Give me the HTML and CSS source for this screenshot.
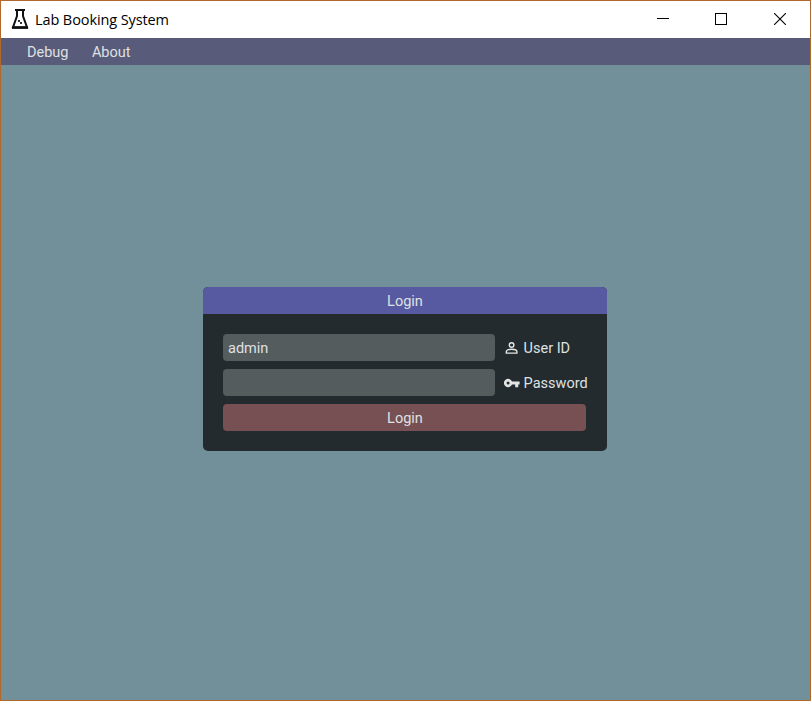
FILE: index.html
```html
<!DOCTYPE html>
<html lang="en">
<head>
<meta charset="utf-8">
<title>Lab Booking System</title>
<link rel="stylesheet" href="styles.css">
</head>
<body>
<div class="window">
  <header class="titlebar">
    <svg class="flask" width="18" height="22" viewBox="0 0 18 22" fill="none" stroke="#111" stroke-width="2">
      <path d="M4 2H14"/>
      <path d="M6 2V8L2 19.2H16L12 8V2" stroke-width="2"/>
      <path d="M1 19.7H17" stroke-width="2.4"/>
      <path d="M7 12H9V14H7ZM9 14H11V16H9Z" fill="#333" stroke="none"/>
    </svg>
    <h1 class="title">Lab Booking System</h1>
    <div class="controls">
      <svg width="12" height="12" viewBox="0 0 12 12" shape-rendering="crispEdges"><path d="M0 5H12V6H0Z"/></svg>
      <svg width="12" height="12" viewBox="0 0 12 12" fill="none" stroke="#000" shape-rendering="crispEdges"><path d="M.5 .5H11.5V11.5H.5Z"/></svg>
      <svg width="12" height="12" viewBox="0 0 12 12" fill="none" stroke="#000" stroke-width="1.1"><path d="M0 0L12 12M12 0L0 12"/></svg>
    </div>
  </header>
  <nav class="menubar"><span>Debug</span><span>About</span></nav>
  <main class="workspace">
    <form class="login">
      <h2 class="login-title">Login</h2>
      <div class="login-body">
        <div class="field">
          <div class="input">admin</div>
          <svg class="icon" width="16" height="16" viewBox="0 0 16 16" fill="none" stroke="#e3e5e5" stroke-width="1.4"><circle cx="7.6" cy="5" r="2.3"/><path d="M2.3 13.1V11.8C2.3 10.2 5 9.3 7.6 9.3S12.9 10.2 12.9 11.8V13.1Z"/></svg>
          <span>User ID</span>
        </div>
        <div class="field">
          <div class="input"></div>
          <svg class="icon" width="16" height="16" viewBox="0 0 16 16" fill="#e3e5e5"><path fill-rule="evenodd" d="M8 6.5H15.6V9.5H14.2V12.2H11.2V9.5H8A4.2 4.2 0 1 1 8 6.5ZM4.1 6.5A1.5 1.5 0 1 0 4.1 9.5A1.5 1.5 0 1 0 4.1 6.5Z"/></svg>
          <span>Password</span>
        </div>
        <div class="submit">Login</div>
      </div>
    </form>
  </main>
</div>
</body>
</html>
```
FILE: styles.css
```css
* { box-sizing: border-box; }
body { margin: 0; font: 14.5px/29px Roboto, sans-serif; color: #dfe1e2; }
.window {
  display: flex; flex-direction: column; width: 811px; height: 701px;
  border: 1px solid #b0692c; background: #729099;
}
.titlebar { display: flex; align-items: center; height: 37px; padding: 0 24px 0 10px; background: #fff; color: #000; }
.flask { flex: none; margin-top: -1px; }
.title { margin: 0 0 0 6px; font: 14.5px/20px "Open Sans", sans-serif; letter-spacing: -0.1px; }
.controls { display: flex; gap: 47px; margin: -1px 0 0 auto; }
.controls svg:first-child { margin-right: -1px; }
.menubar { display: flex; gap: 23.4px; height: 27px; padding-left: 26px; background: #585b79; }
.workspace { flex: 1; padding: 222px 0 0 202px; }
.login { width: 404px; height: 164px; overflow: hidden; border-radius: 5px; background: #232b2e; }
.login-title { height: 27px; margin: 0; background: #575aa0; font: inherit; text-align: center; }
.login-body { display: grid; gap: 8px; padding: 20px; }
.field { display: flex; height: 27px; white-space: nowrap; }
.input { flex: none; width: 272px; height: 27px; padding-left: 5px; border-radius: 4px; background: #555c5e; }
.icon { flex: none; margin: 6px 3.6px 0 9px; }
.submit { width: 363px; height: 27px; padding-left: 1px; border-radius: 4px; background: #775053; text-align: center; }
```
